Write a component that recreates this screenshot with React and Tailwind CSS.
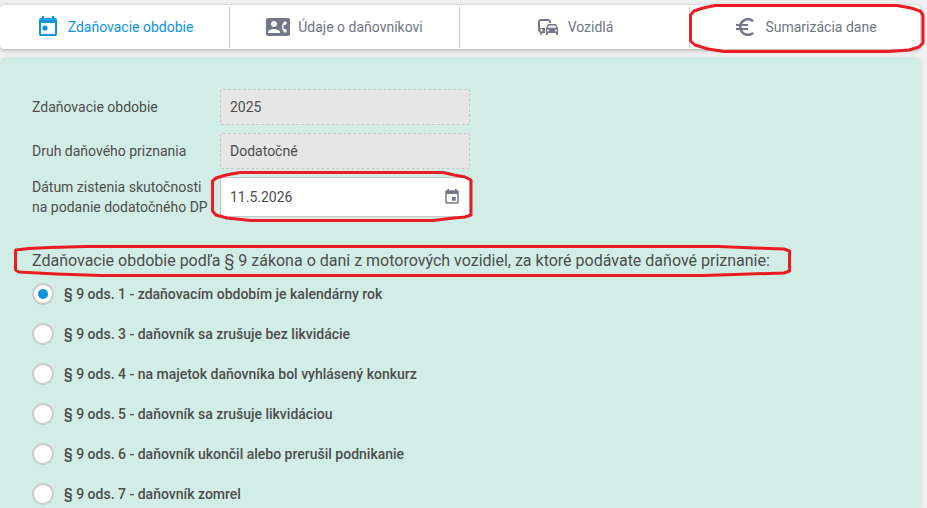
import React, { useState } from 'react';
import { MdContactPhone, MdEuroSymbol, MdEvent } from 'react-icons/md';

const TodayIcon = ({ className }) => (
  <svg viewBox="0 0 24 24" fill="currentColor" className={className} aria-hidden="true">
    <path d="M19 3h-1V1h-2v2H8V1H6v2H5c-1.1 0-2 .9-2 2v14c0 1.1.9 2 2 2h14c1.1 0 2-.9 2-2V5c0-1.1-.9-2-2-2zm0 16H5V8h14v11z" />
    <circle cx="9" cy="13" r="2.6" />
  </svg>
);

// Bus behind a car
const VehiclesIcon = ({ className }) => (
  <svg viewBox="0 0 24 24" fill="currentColor" fillRule="evenodd" className={className} aria-hidden="true">
    <path d="M12 4H5C3.340 4 2 5.340 2 7v8c0 1.660 1.340 3 3 3l-1 1v1h1l2-2h2v-5H4V6h9v2h2V7c0-1.660-1.340-3-3-3zM5.500 14a1.200 1.200 0 1 1 0 2.400a1.200 1.200 0 0 1 0-2.400z" />
    <path d="M20.570 9.660C20.430 9.260 20.050 9 19.600 9h-7.190c-.46 0-.83.26-.98.66L10 13.770V19.280c0 .38.31.72.69.72h.62c.38 0 .69-.38.69-.76V18h8v1.240c0 .38.31.76.69.76h.62c.38 0 .69-.34.69-.72V13.770zM12.600 10.500h6.800l.7 2.300h-8.200zM12 14.500a1 1 0 1 1 0 2a1 1 0 0 1 0-2zM20 14.500a1 1 0 1 1 0 2a1 1 0 0 1 0-2z" />
  </svg>
);

const tabs = [
  { id: 'obdobie', label: 'Zdaňovacie obdobie', icon: TodayIcon },
  { id: 'udaje', label: 'Údaje o daňovníkovi', icon: MdContactPhone },
  { id: 'vozidla', label: 'Vozidlá', icon: VehiclesIcon },
  { id: 'sumar', label: 'Sumarizácia dane', icon: MdEuroSymbol, marked: true },
];

const periods = [
  '§ 9 ods. 1 - zdaňovacím obdobím je kalendárny rok',
  '§ 9 ods. 3 - daňovník sa zrušuje bez likvidácie',
  '§ 9 ods. 4 - na majetok daňovníka bol vyhlásený konkurz',
  '§ 9 ods. 5 - daňovník sa zrušuje likvidáciou',
  '§ 9 ods. 6 - daňovník ukončil alebo prerušil podnikanie',
  '§ 9 ods. 7 - daňovník zomrel',
];

// Hand-drawn red outline laid over whatever it highlights
const Marker = ({ viewBox, d, className }) => (
  <svg
    viewBox={viewBox}
    preserveAspectRatio="none"
    className={`pointer-events-none absolute z-10 ${className}`}
    aria-hidden="true"
  >
    <path d={d} fill="none" stroke="#ed1c24" strokeWidth="3" strokeLinejoin="round" vectorEffect="non-scaling-stroke" />
  </svg>
);

const Tab = ({ tab, active, onClick }) => {
  const Icon = tab.icon;
  return (
    <button
      type="button"
      onClick={onClick}
      className={`relative flex items-center justify-center gap-2 border-r border-[#cccccc] last:border-r-0 ${
        active ? 'text-[#0a96dd]' : 'text-[#737789]'
      }`}
    >
      <Icon className="size-6 shrink-0" />
      <span className={active ? '' : 'text-[#6f7680]'}>{tab.label}</span>
      {tab.marked && (
        <Marker
          viewBox="0 0 237 50"
          d="M27 2.500H209L223 5L232 8L235 12V40L231 44L221 47L200 48.500H36L20 46L7 42L2.500 38V12L6 8L15 5Z"
          className="-top-[3px] -left-[2px] h-[50px] w-[237px]"
        />
      )}
    </button>
  );
};

const Field = ({ id, label, children }) => (
  <div className="flex items-center">
    <label htmlFor={id} className="w-[188px] shrink-0 leading-5 whitespace-pre-line">{label}</label>
    <div className="relative w-[250px]">{children}</div>
  </div>
);

const readOnlyInput =
  'block h-9 w-full rounded-[3px] border border-dashed border-[#c8c8c8] bg-[#e6e6e6] px-[9px] outline-none';

const App = () => {
  const [tab, setTab] = useState('obdobie');
  const [period, setPeriod] = useState(0);
  const [date, setDate] = useState('11.5.2026');

  return (
    <div className="flex min-h-screen flex-col gap-2 bg-[#f0f0f0] pt-[5px] pr-[7px] font-['Roboto','Noto_Sans',sans-serif] text-sm text-[#4d4d4d]">
      <nav className="grid h-11 grid-cols-4 rounded bg-white py-px shadow-[0_1px_4px_rgba(0,0,0,0.3)]">
        {tabs.map((t) => (
          <Tab key={t.id} tab={t} active={tab === t.id} onClick={() => setTab(t.id)} />
        ))}
      </nav>

      <main className="flex-1 rounded-t-md bg-[#d2ede5] px-8 pt-8 shadow-[2px_0_3px_rgba(0,0,0,0.06)]">
        <div className="flex flex-col gap-2">
          <Field id="year" label="Zdaňovacie obdobie">
            <input id="year" readOnly value="2025" className={readOnlyInput} />
          </Field>
          <Field id="kind" label="Druh daňového priznania">
            <input id="kind" readOnly value="Dodatočné" className={readOnlyInput} />
          </Field>
          <Field id="date" label={'Dátum zistenia skutočnosti\nna podanie dodatočného DP'}>
            <input
              id="date"
              value={date}
              onChange={(e) => setDate(e.target.value)}
              className="block h-10 w-full rounded-[3px] border border-[#c8c8c8] bg-white pr-9 pl-[9px] outline-none"
            />
            <button type="button" aria-label="Kalendár" className="absolute inset-y-0 right-[9px] text-[#737789]">
              <MdEvent className="size-[18px]" />
            </button>
            <Marker
              viewBox="0 0 262 51"
              d="M29 1.500H232L243 4L254 6L260 9V44L254 46L243 47L222 49.500H40L16 47L5 44L1.500 40V10L5 7L15 4Z"
              className="-top-[6px] -left-[9px] h-[51px] w-[262px]"
            />
          </Field>
        </div>

        <fieldset className="mt-8">
          <legend className="relative text-base leading-6">
            Zdaňovacie obdobie podľa § 9 zákona o dani z motorových vozidiel, za ktoré podávate daňové priznanie:
            <Marker
              viewBox="0 0 777 32"
              d="M72 1.500H705L740 3L770 4L775.500 6V26L770 28L735 29L690 30.500H87L42 29L5 27L1.500 25V5L15 3.500L36 2.500Z"
              className="-top-1 -left-[18px] h-8 w-[777px]"
            />
          </legend>
          <div className="mt-[10px] flex flex-col gap-[18px]">
            {periods.map((text, i) => (
              <label key={text} className="flex h-[22px] items-center gap-[10px] font-medium">
                <input
                  type="radio"
                  name="period"
                  checked={period === i}
                  onChange={() => setPeriod(i)}
                  className="grid size-[22px] shrink-0 appearance-none place-items-center rounded-full border-2 border-[#cccccc] bg-white before:size-[10px] before:rounded-full checked:before:bg-[#0a96dd]"
                />
                {text}
              </label>
            ))}
          </div>
        </fieldset>
      </main>
    </div>
  );
};

export default App;
